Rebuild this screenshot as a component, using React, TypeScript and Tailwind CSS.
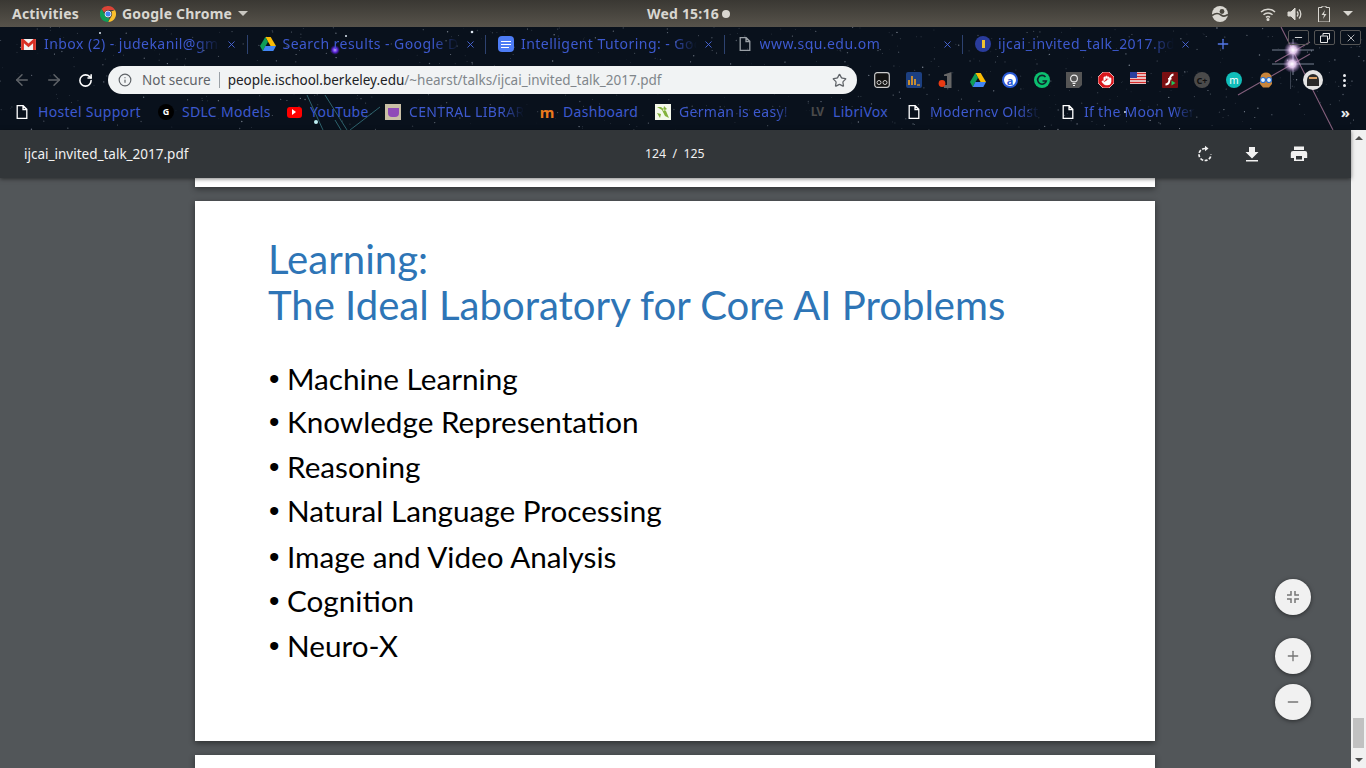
import { ArrowLeft, ArrowRight, Hand, Info, Minus, Plus, RotateCw, Star, X } from "lucide-react";

const sans = "font-['Noto_Sans','Open_Sans',sans-serif]";

// seeded so the sky stays the same on every load
function makeStars(count: number) {
  let seed = 42;
  const next = () => {
    seed = (seed * 16807) % 2147483647;
    return seed / 2147483647;
  };
  const stars = [];
  for (let i = 0; i < count; i++) {
    stars.push({ x: next() * 1366, y: next() * 103, r: 0.3 + next() * 0.45, o: 0.12 + next() * 0.5 });
  }
  return stars;
}

function DocIcon({ className }: { className: string }) {
  return (
    <svg viewBox="0 0 16 16" className={className} fill="none" stroke="currentColor" strokeWidth="1.3">
      <path d="M3.2 1.7h6l3.6 3.6v9H3.2z M9 1.7v3.8h3.8" />
    </svg>
  );
}

function ChromeLogo() {
  return (
    <svg viewBox="0 0 16 16" className="w-4 h-4">
      <path d="M8 0a8 8 0 0 1 7 4H8a4 4 0 0 0-3.8 2.6L1.6 3A8 8 0 0 1 8 0z" fill="#db4437" />
      <path d="M15 4a8 8 0 0 1-6.9 12l3.4-5.8A4 4 0 0 0 11.2 5.6z" fill="#fbc02d" />
      <path d="M8.1 16A8 8 0 0 1 1.6 3l3.4 6a4 4 0 0 0 4.4 2.9z" fill="#0f9d58" />
      <circle cx="8" cy="8" r="3" fill="#4285f4" stroke="#fff" strokeWidth="0.8" />
    </svg>
  );
}

function DriveIcon() {
  return (
    <svg viewBox="0 0 16 14" className="w-4 h-[14px]">
      <path d="M5.3 0h5.4l5.3 9h-5.4z" fill="#fbbc04" />
      <path d="M5.3 0 0 9l2.7 5 5.3-9.2z" fill="#0f9d58" />
      <path d="M2.7 14h10.6l2.7-5H5.4z" fill="#4285f4" />
    </svg>
  );
}

function Tab({ title, icon, last }: { title: string; icon: React.ReactNode; last?: boolean }) {
  return (
    <div className="relative w-[238.5px] h-full flex items-center shrink-0">
      <div className="w-[35px] pl-3 flex items-center shrink-0">{icon}</div>
      <div className="w-[176px] pb-[2px] overflow-hidden whitespace-nowrap text-[14px] tracking-[0.45px] text-[#3d59cf] [mask-image:linear-gradient(to_right,black_85%,transparent)]">
        {title}
      </div>
      <X className="absolute left-[217px] w-[11px] h-[11px] text-[#4a68dc]" strokeWidth={2} />
      {!last && <div className="absolute right-0 top-[8px] h-[19px] w-px bg-[#2d4270]" />}
    </div>
  );
}

function Bookmark({ title, icon, width, gap }: { title: string; icon: React.ReactNode; width: string; gap: string }) {
  return (
    <div className={`flex items-center shrink-0 ${gap}`}>
      <div className="w-4 h-4 flex items-center justify-center">{icon}</div>
      <div className={`ml-2 pb-[2px] overflow-hidden whitespace-nowrap text-[14px] tracking-[0.3px] text-[#3d59cf] ${width}`}>{title}</div>
    </div>
  );
}

function Extensions() {
  return (
    <div className="flex items-center ml-[9px]">
      <div className="w-8 flex justify-center">
        <svg viewBox="0 0 16 16" className="w-4 h-4">
          <rect x="0.7" y="0.7" width="14.6" height="14.6" rx="2.5" fill="#111" stroke="#ccc" strokeWidth="1.2" />
          <circle cx="5" cy="10.500" r="2" fill="none" stroke="#ccc" />
          <circle cx="11" cy="10.500" r="2" fill="none" stroke="#ccc" />
        </svg>
      </div>
      <div className="w-8 flex justify-center">
        <svg viewBox="0 0 16 16" className="w-4 h-4">
          <rect width="16" height="16" rx="2" fill="#1c3f80" />
          <path d="M3 13V8M6 13V4M9 13V7" stroke="#f4a21d" strokeWidth="1.6" />
          <path d="M11 13h3" stroke="#f4a21d" strokeWidth="1.2" />
        </svg>
      </div>
      <div className="w-8 flex justify-center">
        <svg viewBox="0 0 16 16" className="w-4 h-4">
          <path d="M6 2.500 13.500 0v16H6l-.500-3h3.500V4H6z" fill="#666" />
          <circle cx="4" cy="11.500" r="3.400" fill="#ea3a12" />
        </svg>
      </div>
      <div className="w-8 flex justify-center">
        <DriveIcon />
      </div>
      <div className="w-8 flex justify-center">
        <div className="w-4 h-4 rounded-full bg-white border-2 border-[#2a5bd8] flex items-center justify-center text-[11px] leading-none font-bold text-[#2a5bd8]">a</div>
      </div>
      <div className="w-8 flex justify-center">
        <svg viewBox="0 0 16 16" className="w-4 h-4">
          <circle cx="8" cy="8" r="8" fill="#0cbf6f" />
          <path d="M11.5 5A4.4 4.4 0 1 0 12.3 9H8.5" fill="none" stroke="#10222a" strokeWidth="1.6" />
        </svg>
      </div>
      <div className="w-8 flex justify-center">
        <svg viewBox="0 0 16 16" className="w-4 h-4">
          <path d="M0 0h16v13l-3 3H0z" fill="#555" />
          <circle cx="8" cy="6.500" r="3.400" fill="none" stroke="#eee" strokeWidth="1.100" />
          <path d="M6.500 11.500h3M7 13.500h2" stroke="#eee" />
        </svg>
      </div>
      <div className="w-8 flex justify-center">
        <div className="relative w-4 h-4 flex items-center justify-center">
          <svg viewBox="0 0 16 16" className="absolute inset-0 w-4 h-4">
            <path d="M5 0h6l5 5v6l-5 5H5l-5-5V5z" fill="#d8161b" stroke="#f4d4d4" strokeWidth="0.8" />
          </svg>
          <Hand className="relative w-[11px] h-[11px] text-white fill-white" strokeWidth={1} />
        </div>
      </div>
      <div className="w-8 flex justify-center">
        <svg viewBox="0 0 16 12" className="w-4 h-3 -mt-1">
          <rect width="16" height="12" fill="#eee" />
          <path d="M0 1.5h16M0 4.5h16M0 7.5h16M0 10.5h16" stroke="#d62b2b" strokeWidth="1.3" />
          <rect width="7" height="6" fill="#2b3f9e" />
        </svg>
      </div>
      <div className="w-8 flex justify-center">
        <svg viewBox="0 0 16 16" className="w-4 h-4">
          <rect width="16" height="16" rx="1" fill="#7b0f12" />
          <path d="M11.500 2.500C7.500 3 8 7 7 10c-.5 1.500-2 2.500-3.500 2.500" fill="none" stroke="#fff" strokeWidth="2" />
          <path d="M6 6.800h3.500" stroke="#fff" strokeWidth="1.600" />
          <path d="M9.500 8.500v5l4-2.500z" fill="#21c45a" />
        </svg>
      </div>
      <div className="w-8 flex justify-center">
        <div className="w-4 h-4 rounded-full bg-[#4a4a4a] flex items-center justify-center text-[9px] leading-none font-bold text-[#111]">C+</div>
      </div>
      <div className="w-8 flex justify-center">
        <div className="w-4 h-4 rounded-full bg-[#10bdb8] flex items-center justify-center text-[10px] leading-none text-white">m</div>
      </div>
      <div className="w-8 flex justify-center">
        <svg viewBox="0 0 16 16" className="w-4 h-4">
          <path d="M2.500 5C3 2 5 .5 8 .5S13 2 13.500 5l.500 7-3 3.500H5L2 12z" fill="#c9853a" />
          <circle cx="5" cy="8" r="2.500" fill="#e4f4ff" stroke="#2a6fd0" strokeWidth="1.200" />
          <circle cx="11" cy="8" r="2.500" fill="#e4f4ff" stroke="#2a6fd0" strokeWidth="1.200" />
        </svg>
      </div>
    </div>
  );
}

function Sky() {
  const stars = makeStars(700);
  return (
    <svg className="absolute inset-0 w-[1366px] h-[103px]" viewBox="0 0 1366 103">
      <defs>
        <radialGradient id="flare">
          <stop offset="0" stopColor="#fff" />
          <stop offset="0.4" stopColor="#f0d4fa" stopOpacity="0.9" />
          <stop offset="1" stopColor="#a070c0" stopOpacity="0" />
        </radialGradient>
        <radialGradient id="violet">
          <stop offset="0" stopColor="#b9a0ff" />
          <stop offset="0.5" stopColor="#5b24d8" />
          <stop offset="1" stopColor="#3a1a90" stopOpacity="0" />
        </radialGradient>
      </defs>
      {stars.map((s, i) => (
        <circle key={i} cx={s.x} cy={s.y} r={s.r} fill="#cfd8e6" opacity={s.o} />
      ))}
      <g fill="#dfe8f2">
        <circle cx="472" cy="5" r="1.300" />
        <circle cx="316" cy="95" r="2" fill="#bfeff2" />
        <circle cx="346" cy="9" r="1" />
        <circle cx="100" cy="6" r="1" />
        <circle cx="1125" cy="85" r="1" />
      </g>
      <g stroke="#3f8a94" strokeWidth="0.9" opacity="0.75">
        <path d="M307 68l16 35M325 68l22 35M350 103l30-23M335 93l6 10" />
      </g>
      <circle cx="335" cy="23" r="5" fill="url(#violet)" />
      <g stroke="#b77fa4" strokeWidth="1.100" opacity="0.7">
        <path d="M1281 0l52 103M1238 68l72-41M1275 35l35-20" />
      </g>
      <path d="M1272 23h42M1293 12v22M1272 37h42M1293 28v20" stroke="#dfe8ff" strokeWidth="0.8" opacity="0.65" />
      <circle cx="1293" cy="23" r="9" fill="url(#flare)" />
      <circle cx="1292" cy="37" r="9" fill="url(#flare)" />
    </svg>
  );
}

const topics = [
  { label: "Machine Learning", row: "h-[43px]" },
  { label: "Knowledge Representation", row: "h-[45px]" },
  { label: "Reasoning", row: "h-[44px]" },
  { label: "Natural Language Processing", row: "h-[46px]" },
  { label: "Image and Video Analysis", row: "h-[44px]" },
  { label: "Cognition", row: "h-[45px]" },
  { label: "Neuro-X", row: "h-[44px]" },
];

export default function App() {
  return (
    <div className={`w-[1366px] h-[768px] overflow-hidden flex flex-col bg-[#525659] ${sans}`}>
      {/* gnome panel */}
      <div className="h-[27px] shrink-0 relative flex items-center px-3 bg-gradient-to-b from-[#3a3833] to-[#57534b] text-[#d9d7d1] text-[14px] font-bold tracking-[0.2px]">
        <span>Activities</span>
        <div className="ml-[21px] flex items-center">
          <ChromeLogo />
          <span className="ml-[6px]">Google Chrome</span>
          <div className="ml-[6px] w-0 h-0 border-x-[5px] border-x-transparent border-t-[5px] border-t-[#c9c7c1]" />
        </div>
        <div className="absolute left-[647px] flex items-center">
          <span>Wed 15:16</span>
          <div className="ml-[3px] w-2 h-2 rounded-full bg-[#d9d7d1]" />
        </div>
        <div className="ml-auto flex items-center text-[#d9d7d1]">
          <svg viewBox="0 0 16 16" className="w-4 h-4">
            <circle cx="8" cy="8" r="8" fill="#d9d7d1" />
            <circle cx="10" cy="5.500" r="2.400" fill="#4a473f" />
            <path d="M0 9.500c4-3 7-2 9-.5s5 1 7-.5" fill="none" stroke="#4a473f" strokeWidth="1.600" />
          </svg>
          <svg viewBox="0 0 16 16" className="w-4 h-4 ml-[32px]" fill="none" stroke="currentColor" strokeWidth="1.500">
            <path d="M1 6a10 10 0 0 1 14 0M3.500 8.800a6.500 6.500 0 0 1 9 0M6 11.400a3 3 0 0 1 4 0" />
            <circle cx="8" cy="13.500" r="0.800" fill="currentColor" />
          </svg>
          <svg viewBox="0 0 16 16" className="w-4 h-4 ml-[11px]" fill="none" stroke="currentColor">
            <path d="M1 6h3l4-4v12l-4-4H1z" fill="currentColor" />
            <path d="M10 5.500a3.500 3.500 0 0 1 0 5M12 3.500a6.500 6.500 0 0 1 0 9" strokeWidth="1.300" />
          </svg>
          <svg viewBox="0 0 12 16" className="w-3 h-4 ml-[15px]">
            <path d="M4 0h4v1.500h3.500V16H.5V1.500H4z" fill="none" stroke="currentColor" />
            <path d="M7 4L3.500 9H6l-1 4 3.500-5H6z" fill="currentColor" />
          </svg>
          <div className="ml-[13px] mr-[1px] w-0 h-0 border-x-[5px] border-x-transparent border-t-[5px] border-t-[#d9d7d1]" />
        </div>
      </div>

      {/* chrome frame */}
      <div className="h-[103px] shrink-0 relative bg-[#09111c] overflow-hidden">
        <Sky />
        <div className="relative h-[34px] flex pl-[9px]">
          <Tab
            title="Inbox (2) - judekanil@gmail.com"
            icon={
              <svg viewBox="0 0 16 12" className="w-[15px] h-[11px]">
                <rect width="16" height="12" fill="#f2f2f2" />
                <path d="M0 0h2.500L8 5l5.500-5H16v12h-3V4.500L8 9 3 4.500V12H0z" fill="#d93025" />
              </svg>
            }
          />
          <Tab title="Search results - Google Drive" icon={<DriveIcon />} />
          <Tab
            title="Intelligent Tutoring: - Google Docs"
            icon={
              <div className="w-4 h-4 rounded-sm bg-[#4d7cf5] flex flex-col justify-center gap-[2px] px-[3px]">
                <div className="h-px bg-white" />
                <div className="h-px bg-white" />
                <div className="h-px bg-white w-2" />
              </div>
            }
          />
          <Tab title="www.squ.edu.om" icon={<DocIcon className="w-4 h-4 text-[#9aa0a6]" />} />
          <Tab
            title="ijcai_invited_talk_2017.pdf"
            last
            icon={
              <div className="w-4 h-4 rounded-full bg-[#2a3c9c] flex items-center justify-center">
                <div className="w-[3px] h-2 bg-[#f2c230]" />
              </div>
            }
          />
          <Plus className="w-4 h-4 ml-[13px] mt-[9px] text-[#5478e8]" strokeWidth={2} />
          <div className="ml-auto flex gap-[5px] pr-[5px] pt-[3px] items-start text-[#e8e8e8]">
            <div className="w-[21px] h-[15px] border border-[#555] rounded-[2px] flex items-center justify-center">
              <Minus className="w-[11px] h-[11px]" strokeWidth={2} />
            </div>
            <div className="w-[21px] h-[15px] border border-[#555] rounded-[2px] flex items-center justify-center">
              <svg viewBox="0 0 10 10" className="w-[10px] h-[10px]" fill="none" stroke="currentColor">
                <path d="M3 2.500V.5h6.500V6H7.500M.5 3h7v6.500h-7z" />
              </svg>
            </div>
            <div className="w-[21px] h-[15px] border border-[#555] rounded-[2px] flex items-center justify-center">
              <X className="w-3 h-3" strokeWidth={1.500} />
            </div>
          </div>
        </div>

        <div className="relative h-[38px] flex items-center pl-[13px]">
          <ArrowLeft className="w-[18px] h-[18px] text-[#5f6368]" strokeWidth={2} />
          <ArrowRight className="w-[18px] h-[18px] ml-[14px] text-[#5f6368]" strokeWidth={2} />
          <RotateCw className="w-[15px] h-[15px] ml-[15px] text-white" strokeWidth={2.500} />
          <div className="ml-[15px] w-[749px] h-[28px] rounded-full bg-[#f1f3f4] flex items-center pl-[10px] pr-[10px] text-[13.500px] shrink-0">
            <Info className="w-[14px] h-[14px] text-[#5f6368]" strokeWidth={2} />
            <span className="ml-[10px] text-[#5f6368]">Not secure</span>
            <div className="mx-2 w-px h-[16px] bg-[#9aa0a6]" />
            <span className="text-[#202124]">people.ischool.berkeley.edu</span>
            <span className="text-[#80868b]">/~hearst/talks/ijcai_invited_talk_2017.pdf</span>
            <Star className="ml-auto w-[15px] h-[15px] text-[#5f6368]" strokeWidth={2} />
          </div>
          <Extensions />
          <div className="ml-2 w-px h-[18px] bg-[#3a4250]" />
          <div className="ml-[12px] w-5 h-5 rounded-full bg-[#e4e4e4] flex items-center justify-center overflow-hidden">
            <div className="w-3 h-[12px] rounded-t-md bg-[#2a2a2a] flex justify-center pt-[3px]">
              <div className="w-2 h-[2px] bg-[#d9a066]" />
            </div>
          </div>
          <div className="ml-[20px] flex flex-col gap-[2px]">
            <div className="w-[3px] h-[3px] rounded-full bg-[#e8eaed]" />
            <div className="w-[3px] h-[3px] rounded-full bg-[#e8eaed]" />
            <div className="w-[3px] h-[3px] rounded-full bg-[#e8eaed]" />
          </div>
        </div>

        <div className="relative h-[26px] flex items-center pl-[14px]">
          <Bookmark title="Hostel Support" width="w-[104px]" gap="" icon={<DocIcon className="w-4 h-4 text-white" />} />
          <Bookmark
            title="SDLC Models"
            width="w-[88px]"
            gap="ml-4"
            icon={<div className="w-4 h-4 rounded-full bg-black text-white text-[9px] font-bold leading-4 text-center">G</div>}
          />
          <Bookmark
            title="YouTube"
            width="w-[60px]"
            gap="ml-4"
            icon={
              <div className="w-[15px] h-[11px] rounded-[3px] bg-[#f00] flex items-center justify-center">
                <div className="w-0 h-0 border-y-[3px] border-y-transparent border-l-[4px] border-l-white" />
              </div>
            }
          />
          <Bookmark
            title="CENTRAL LIBRARY"
            width="w-[115px] [mask-image:linear-gradient(to_right,black_80%,transparent)]"
            gap="ml-[15px]"
            icon={
              <div className="w-4 h-4 bg-[#c9bfa6] flex items-center justify-center">
                <div className="w-[11px] h-[9px] bg-[#8f4bb8] rounded-b-sm" />
              </div>
            }
          />
          <Bookmark
            title="Dashboard"
            width="w-[76px]"
            gap="ml-[15px]"
            icon={<span className="text-[15px] font-bold leading-none text-[#ea7a1c]">m</span>}
          />
          <Bookmark
            title="German is easy! Learn"
            width="w-[114px] [mask-image:linear-gradient(to_right,black_85%,transparent)]"
            gap="ml-[16px]"
            icon={
              <svg viewBox="0 0 16 16" className="w-4 h-4">
                <rect width="16" height="16" fill="#f4f8ea" />
                <path d="M2 3l5 3 3 6 4 2-3-7-5-4zM9 2l3 3-4 2zM2 9l4 1-1 4z" fill="#84b23c" />
              </svg>
            }
          />
          <Bookmark
            title="LibriVox"
            width="w-[56px]"
            gap="ml-4"
            icon={<span className="text-[12px] font-bold leading-none tracking-[-1px] text-[#4a4a4a]">LV</span>}
          />
          <Bookmark
            title="Moderncv Oldstyle"
            width="w-[110px] [mask-image:linear-gradient(to_right,black_80%,transparent)]"
            gap="ml-[17px]"
            icon={<DocIcon className="w-4 h-4 text-white" />}
          />
          <Bookmark
            title="If the Moon Were Only"
            width="w-[111px] [mask-image:linear-gradient(to_right,black_80%,transparent)]"
            gap="ml-[20px]"
            icon={<DocIcon className="w-4 h-4 text-white" />}
          />
          <span className="ml-auto mr-[16px] text-[15px] font-bold leading-none text-[#e8eaed]">»</span>
        </div>
      </div>

      {/* pdf viewer */}
      <div className="flex-1 min-h-0 flex">
        <div className="w-[1351px] flex flex-col relative">
          <div className="relative z-10 h-[48px] shrink-0 flex items-center bg-[#323639] shadow-[0_1px_4px_rgba(0,0,0,0.5)] pl-[24px] pr-[43px] text-[13.500px] text-[#f1f1f1]">
            <span>ijcai_invited_talk_2017.pdf</span>
            <span className="absolute left-[645px] text-[12.300px]">124&nbsp;&nbsp;/&nbsp;&nbsp;125</span>
            <div className="ml-auto flex items-center gap-[29px]">
              <svg viewBox="0 0 18 18" className="w-[18px] h-[18px]" fill="none" stroke="#f1f1f1" strokeWidth="1.700">
                <path d="M9 3.500a6 6 0 1 0 6 6" strokeDasharray="3 1.500" />
                <path d="M9 .8v5.400L12.500 3.500z" fill="#f1f1f1" stroke="none" />
              </svg>
              <svg viewBox="0 0 18 18" className="w-[18px] h-[18px]" fill="#f1f1f1">
                <path d="M6 2h6v5h3.500L9 13.500 2.500 7H6zM3 15h12v1.600H3z" />
              </svg>
              <svg viewBox="0 0 18 18" className="w-[18px] h-[18px]" fill="#f1f1f1">
                <path d="M4 1.500h10V5H4zM3 6h12a2.200 2.200 0 0 1 2.200 2.200V13H14v3H4v-3H.8V8.200A2.200 2.200 0 0 1 3 6zm3 5v3.500h6V11z" />
              </svg>
            </div>
          </div>

          <div className="flex-1 min-h-0 overflow-hidden flex flex-col items-center gap-[14px] pr-px">
            <div className="w-[960px] h-[9px] shrink-0 bg-white shadow-[0_2px_6px_rgba(0,0,0,0.45)]" />
            <div className="w-[960px] h-[540px] shrink-0 bg-white shadow-[0_2px_6px_rgba(0,0,0,0.45)] pl-[73px] pt-[35px] font-['Lato',sans-serif]">
              <h1 className="text-[40.100px] leading-[46px] font-normal text-[#2e75b6]">
                Learning:
                <br />
                The Ideal Laboratory for Core AI Problems
              </h1>
              <ul className="mt-[29px] text-[29.700px] leading-[44px] text-black">
                {topics.map((t) => (
                  <li key={t.label} className={`flex ${t.row}`}>
                    <span className="w-[19px] shrink-0 pl-px font-['Liberation_Sans',sans-serif]">•</span>
                    {t.label}
                  </li>
                ))}
              </ul>
            </div>
            <div className="w-[960px] flex-1 bg-white shadow-[0_2px_6px_rgba(0,0,0,0.45)]" />
          </div>

          <div className="absolute right-[40px] top-[449px] w-9 h-9 rounded-full bg-[#f1f1f1] shadow-[0_1px_4px_rgba(0,0,0,0.5)] flex items-center justify-center">
            <svg viewBox="0 0 14 14" className="w-[14px] h-[14px]" fill="none" stroke="#757575" strokeWidth="1.500">
              <path d="M5 1v4H1M9 1v4h4M5 13V9H1M9 13V9h4" />
            </svg>
          </div>
          <div className="absolute right-[40px] top-[508px] w-9 h-9 rounded-full bg-[#f1f1f1] shadow-[0_1px_4px_rgba(0,0,0,0.5)] flex items-center justify-center">
            <Plus className="w-4 h-4 text-[#757575]" strokeWidth={2} />
          </div>
          <div className="absolute right-[40px] top-[554px] w-9 h-9 rounded-full bg-[#f1f1f1] shadow-[0_1px_4px_rgba(0,0,0,0.5)] flex items-center justify-center">
            <Minus className="w-4 h-4 text-[#757575]" strokeWidth={2} />
          </div>
        </div>

        {/* scrollbar */}
        <div className="w-[15px] bg-[#f1f1f1] relative flex flex-col items-center justify-between py-[6px]">
          <div className="w-0 h-0 border-x-[4px] border-x-transparent border-b-[4px] border-b-[#505050]" />
          <div className="absolute left-[2px] top-[588px] w-[11px] h-[30px] bg-[#c1c1c1]" />
          <div className="w-0 h-0 border-x-[4px] border-x-transparent border-t-[4px] border-t-[#505050]" />
        </div>
      </div>
    </div>
  );
}
